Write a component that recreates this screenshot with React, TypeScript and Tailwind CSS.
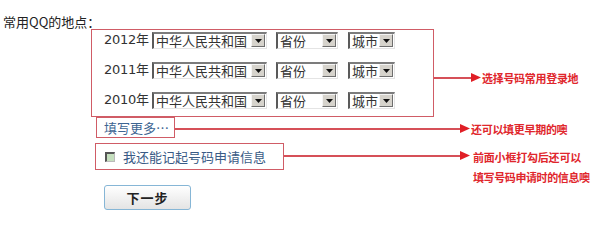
import React from "react";

const CJK = "font-['Noto_Sans_CJK_SC',sans-serif]";

function Arrow({ line, className = "" }: { line: number; className?: string }) {
  return (
    <div className={"flex items-center " + className}>
      <div className="h-[2px] bg-[#d65058]" style={{ width: line }} />
      <svg width="10" height="9" viewBox="0 0 10 9" className="block">
        <polygon points="0,0 10,4.5 0,9" fill="#e01f26" />
      </svg>
    </div>
  );
}

function Select({ w, text }: { w: number; text: string }) {
  return (
    <div
      className="h-[17px] flex items-center bg-white border-t-2 border-l-2 border-b border-r border-t-[#7c7c7c] border-l-[#5a5a5a] border-b-[#e4e4e4] border-r-[#e4e4e4]"
      style={{ width: w }}
    >
      <span className={"flex-1 pl-[2px] text-[13px] leading-[14px] text-[#333] whitespace-nowrap " + CJK}>
        {text}
      </span>
      <div className="w-[14px] h-[13px] mr-[1px] shrink-0 bg-[#d6d3cc] border border-t-[#f4f4f4] border-l-[#f4f4f4] border-b-[#6e6e6e] border-r-[#6e6e6e] flex items-center justify-center">
        <svg width="7" height="4" viewBox="0 0 7 4" className="block">
          <polygon points="0,0 7,0 3.5,4" fill="#111" />
        </svg>
      </div>
    </div>
  );
}

function YearRow({ year }: { year: string }) {
  return (
    <div className="flex items-center h-[16px]">
      <span className="w-[48px] text-[13px] leading-[16px] text-[#333] font-['DejaVu_Sans','Noto_Sans_CJK_SC',sans-serif] tracking-[-0.3px]">
        {year}年
      </span>
      <Select w={115} text="中华人民共和国" />
      <div className="w-[9px]" />
      <Select w={62} text="省份" />
      <div className="w-[10px]" />
      <Select w={47} text="城市" />
    </div>
  );
}

export default function App() {
  return (
    <div className={"w-[594px] h-[232px] bg-white overflow-hidden " + CJK}>
      <div className="pt-[14px] pl-[3px] text-[13px] leading-[16px] text-[#222]">常用QQ的地点：</div>

      <div className="ml-[91px] -mt-[1px] flex items-start">
        <div className="w-[343px] h-[88px] border border-[#d05c66] pl-[12px] pt-[2px] flex flex-col gap-[14px]">
          <YearRow year="2012" />
          <YearRow year="2011" />
          <YearRow year="2010" />
        </div>
        <Arrow line={37} className="mt-[44px]" />
        <span className="mt-[41px] ml-[1px] text-[11px] leading-[16px] font-bold text-[#e0262c] tracking-[-0.3px]">
          选择号码常用登录地
        </span>
      </div>

      <div className="ml-[96px] flex items-start">
        <div className="w-[79px] h-[21px] border border-[#d05c66] pl-[7px] text-[13px] leading-[19px] text-[#3d6592] whitespace-nowrap">
          填写更多…
        </div>
        <Arrow line={285} className="mt-[7px]" />
        <span className="mt-[4px] ml-[1px] text-[11px] leading-[16px] font-bold text-[#e0262c] tracking-[-0.3px]">
          还可以填更早期的噢
        </span>
      </div>

      <div className="ml-[95px] mt-[5px] flex items-start h-[27px]">
        <div className="w-[189px] h-[27px] border border-[#d05c66] pl-[9px] flex items-center">
          <div className="w-[10px] h-[10px] border-t-2 border-l-2 border-b border-r border-t-[#555] border-l-[#555] border-b-[#bbb] border-r-[#bbb] bg-[#c5dfbe]" />
          <span className="ml-[8px] text-[13px] leading-[16px] text-[#3a5b86] whitespace-nowrap">我还能记起号码申请信息</span>
        </div>
        <Arrow line={176} className="mt-[8px]" />
        <div className="ml-[3px] mt-[4px] flex flex-col text-[11px] leading-[20px] font-bold text-[#e0262c] whitespace-nowrap">
          <span className="tracking-[-0.2px]">前面小框打勾后还可以</span>
          <span className="tracking-[-0.4px]">填写号码申请时的信息噢</span>
        </div>
      </div>

      <button className="ml-[104px] mt-[15px] w-[87px] h-[25px] rounded-[3px] border border-[#86b6d6] bg-gradient-to-b from-white to-[#e4e4e4] text-[13px] font-bold text-[#222] flex items-center justify-center tracking-[1px]">
        下一步
      </button>
    </div>
  );
}
